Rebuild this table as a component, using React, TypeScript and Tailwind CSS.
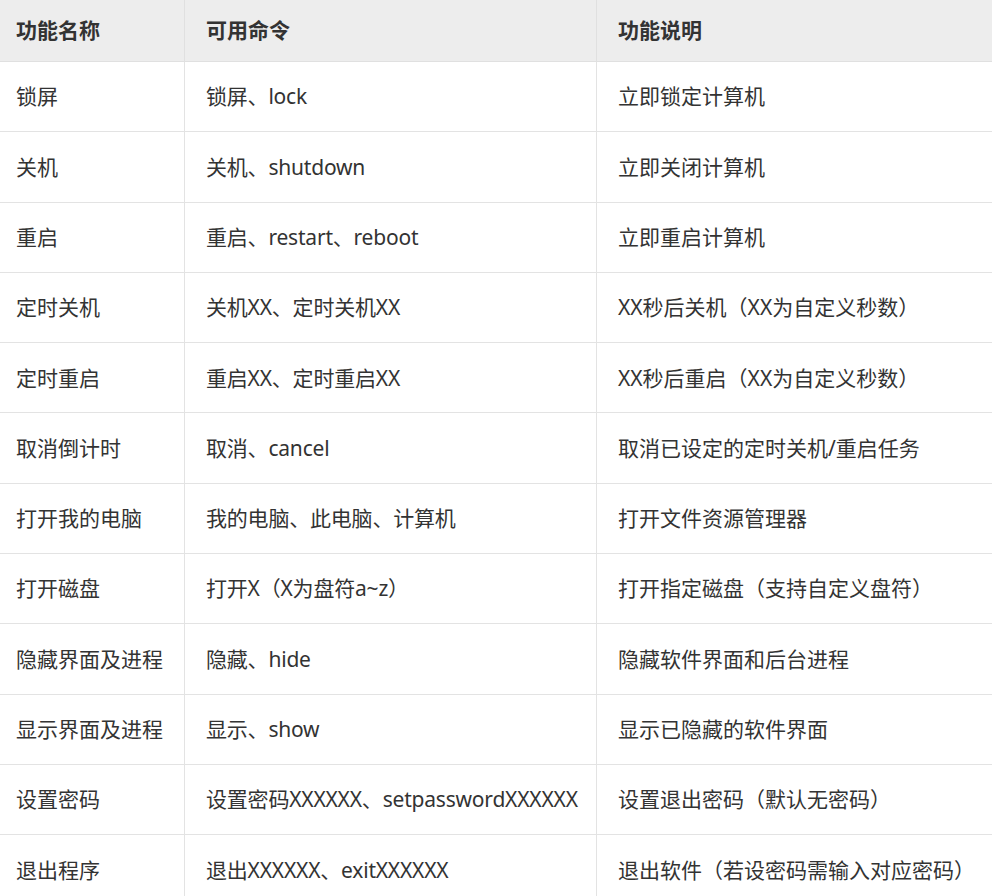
const rows: [string, string, string][] = [
  ["锁屏", "锁屏、lock", "立即锁定计算机"],
  ["关机", "关机、shutdown", "立即关闭计算机"],
  ["重启", "重启、restart、reboot", "立即重启计算机"],
  ["定时关机", "关机XX、定时关机XX", "XX秒后关机（XX为自定义秒数）"],
  ["定时重启", "重启XX、定时重启XX", "XX秒后重启（XX为自定义秒数）"],
  ["取消倒计时", "取消、cancel", "取消已设定的定时关机/重启任务"],
  ["打开我的电脑", "我的电脑、此电脑、计算机", "打开文件资源管理器"],
  ["打开磁盘", "打开X（X为盘符a~z）", "打开指定磁盘（支持自定义盘符）"],
  ["隐藏界面及进程", "隐藏、hide", "隐藏软件界面和后台进程"],
  ["显示界面及进程", "显示、show", "显示已隐藏的软件界面"],
  ["设置密码", "设置密码XXXXXX、setpasswordXXXXXX", "设置退出密码（默认无密码）"],
  ["退出程序", "退出XXXXXX、exitXXXXXX", "退出软件（若设密码需输入对应密码）"],
];

export default function App() {
  return (
    <div
      className="h-[896px] w-[992px] overflow-hidden bg-white text-[21px] text-[#333333]"
      style={{ fontFamily: '"Microsoft YaHei", "Noto Sans", "Noto Sans CJK SC", sans-serif' }}
    >
      <div className="grid h-[62px] grid-cols-[185px_412px_1fr] border-b border-[#e0e0e0] bg-[#ededed] font-bold">
        <div className="flex items-center border-r border-[#e0e0e0] pl-[16px]">功能名称</div>
        <div className="flex items-center border-r border-[#e0e0e0] pl-[21px]">可用命令</div>
        <div className="flex items-center pl-[21px]">功能说明</div>
      </div>
      {rows.map((r) => (
        <div
          key={r[0]}
          className="grid h-[70.3px] grid-cols-[185px_412px_1fr] border-b border-[#e3e3e3]"
        >
          <div className="flex items-center border-r border-[#e3e3e3] pl-[16px] pt-[1px]">{r[0]}</div>
          <div className="flex items-center border-r border-[#e3e3e3] pl-[21px] pt-[1px] tracking-[-0.2px] whitespace-nowrap">{r[1]}</div>
          <div className="flex items-center pl-[21px] pt-[1px] whitespace-nowrap">{r[2]}</div>
        </div>
      ))}
    </div>
  );
}
